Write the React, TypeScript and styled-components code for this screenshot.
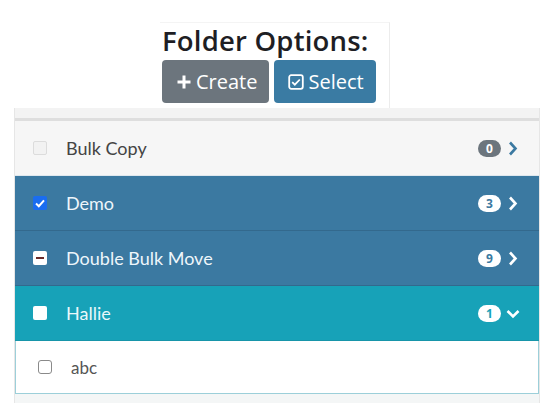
import React from "react";
import styled, { createGlobalStyle, css } from "styled-components";

type CheckState = "disabled" | "checked" | "indeterminate" | "filled" | "empty";
type Tone = "light" | "primary" | "info";

interface Folder {
  name: string;
  count: number;
  check: CheckState;
  tone: Tone;
  open?: boolean;
}

const folders: Folder[] = [
  { name: "Bulk Copy", count: 0, check: "disabled", tone: "light" },
  { name: "Demo", count: 3, check: "checked", tone: "primary" },
  { name: "Double Bulk Move", count: 9, check: "indeterminate", tone: "primary" },
  { name: "Hallie", count: 1, check: "filled", tone: "info", open: true },
];

const GlobalStyle = createGlobalStyle`
  body {
    margin: 0;
    background: #fff;
    font-family: "Open Sans", "Liberation Sans", sans-serif;
  }
`;

const Page = styled.div`
  padding-top: 22px;
`;

const Header = styled.div`
  margin-left: 160px;
  width: 230px;
  height: 86px;
  box-sizing: border-box;
  border-right: 1px solid #ececec;
  border-top: 1px solid #f4f4f4;
  padding-left: 2px;
`;

const Title = styled.h2`
  margin: 0;
  font-size: 27.5px;
  line-height: 35px;
  font-weight: 600;
  color: #1e1e24;
  letter-spacing: 0.2px;
`;

const ButtonRow = styled.div`
  display: flex;
  gap: 5px;
  margin-top: 2px;
`;

const Button = styled.button<{ $variant: "secondary" | "primary" }>`
  display: flex;
  align-items: center;
  gap: 4px;
  height: 43px;
  padding: 0 12px 0 14px;
  border: none;
  border-radius: 4px;
  color: #fff;
  font: 400 20px "Open Sans", "Liberation Sans", sans-serif;
  background: ${({ $variant }) => ($variant === "primary" ? "#3a7ba3" : "#6c757d")};
`;

const Panel = styled.div`
  margin: 0 0 0 14px;
  width: 524px;
  border-left: 1px solid #e6e6e6;
  border-right: 1px solid #e6e6e6;
`;

const TopBand = styled.div`
  height: 10px;
  background: #f3f3f3;
  border-bottom: 3px solid #dedede;
`;

const toneStyles = {
  light: css`
    background: #f6f6f6;
    color: #444;
    border-bottom: 1px solid #dfe8ee;
  `,
  primary: css`
    background: #3b79a1;
    color: #eef6fb;
    border-bottom: 1px solid #33698d;
  `,
  info: css`
    background: #17a2b8;
    color: #eaf8fb;
    border-bottom: 1px solid #1795a9;
  `,
};

const Row = styled.div<{ $tone: Tone }>`
  display: flex;
  align-items: center;
  height: 54px;
  padding: 0 19px 0 18px;
  font: 400 18px Lato, "Open Sans", sans-serif;
  ${({ $tone }) => toneStyles[$tone]}
`;

const Name = styled.span`
  flex: 1;
  margin-left: 19px;
`;

const Badge = styled.span<{ $tone: Tone }>`
  min-width: 23px;
  height: 17px;
  border-radius: 9px;
  box-sizing: border-box;
  padding: 0 5px;
  font: 700 12px "Open Sans", sans-serif;
  line-height: 17px;
  text-align: center;
  background: ${({ $tone }) => ($tone === "light" ? "#6c757d" : "#fff")};
  color: ${({ $tone }) => ($tone === "light" ? "#fff" : $tone === "info" ? "#17a2b8" : "#3b79a1")};
`;

const Chevron = styled.svg<{ $tone: Tone }>`
  margin-left: 5px;
  width: 14px;
  height: 15px;
  color: ${({ $tone }) => ($tone === "light" ? "#3b79a1" : "#fff")};
`;

const Box = styled.span<{ $state: CheckState }>`
  display: inline-flex;
  align-items: center;
  justify-content: center;
  width: 14px;
  height: 14px;
  box-sizing: border-box;
  border-radius: 2px;
  flex-shrink: 0;
  ${({ $state }) =>
    $state === "disabled"
      ? css`
          border: 1px solid #dcdcdc;
          background: #f2f2f2;
        `
      : $state === "checked"
      ? css`
          background: #1a6df0;
        `
      : $state === "empty"
      ? css`
          border: 1px solid #8a8a8a;
          background: #fff;
          border-radius: 3px;
        `
      : css`
          background: #fff;
        `}
`;

const Minus = styled.span`
  width: 8px;
  height: 2px;
  background: #6b2a2a;
`;

const ChildRow = styled.div`
  display: flex;
  align-items: center;
  height: 52px;
  padding-left: 22px;
  background: #fff;
  border: 1px solid #9ccfd9;
  border-top: none;
  font: 400 17px Lato, "Open Sans", sans-serif;
  color: #555;
`;

const BottomBand = styled.div`
  height: 9px;
  background: #f4f6f6;
`;

const CheckBox = ({ state }: { state: CheckState }) => (
  <Box $state={state}>
    {state === "checked" && (
      <svg width="10" height="9" viewBox="0 0 10 9">
        <path d="M1 4.6 L3.8 7.2 L9 1.4" fill="none" stroke="#fff" strokeWidth="2" />
      </svg>
    )}
    {state === "indeterminate" && <Minus />}
  </Box>
);

export default function App() {
  return (
    <Page>
      <GlobalStyle />
      <Header>
        <Title>Folder Options:</Title>
        <ButtonRow>
          <Button $variant="secondary">
            <svg width="16" height="16" viewBox="0 0 16 16">
              <path d="M8 1.5v13M1.5 8h13" stroke="#fff" strokeWidth="3" />
            </svg>
            Create
          </Button>
          <Button $variant="primary">
            <svg width="16" height="16" viewBox="0 0 16 16">
              <rect x="1.2" y="1.2" width="13.6" height="13.6" rx="2" fill="none" stroke="#fff" strokeWidth="1.8" />
              <path d="M4.2 8.2l2.6 2.5 5-5.2" fill="none" stroke="#fff" strokeWidth="1.8" />
            </svg>
            Select
          </Button>
        </ButtonRow>
      </Header>
      <Panel>
        <TopBand />
        {folders.map((f) => (
          <Row key={f.name} $tone={f.tone}>
            <CheckBox state={f.check} />
            <Name>{f.name}</Name>
            <Badge $tone={f.tone}>{f.count}</Badge>
            <Chevron $tone={f.tone} viewBox="0 0 14 15">
              {f.open ? (
                <path d="M1.5 5l5.5 5.5 5.5-5.5" fill="none" stroke="currentColor" strokeWidth="2.6" />
              ) : (
                <path d="M4 1.5l5.5 6-5.5 6" fill="none" stroke="currentColor" strokeWidth="2.6" />
              )}
            </Chevron>
          </Row>
        ))}
        <ChildRow>
          <CheckBox state="empty" />
          <Name>abc</Name>
        </ChildRow>
        <BottomBand />
      </Panel>
    </Page>
  );
}
